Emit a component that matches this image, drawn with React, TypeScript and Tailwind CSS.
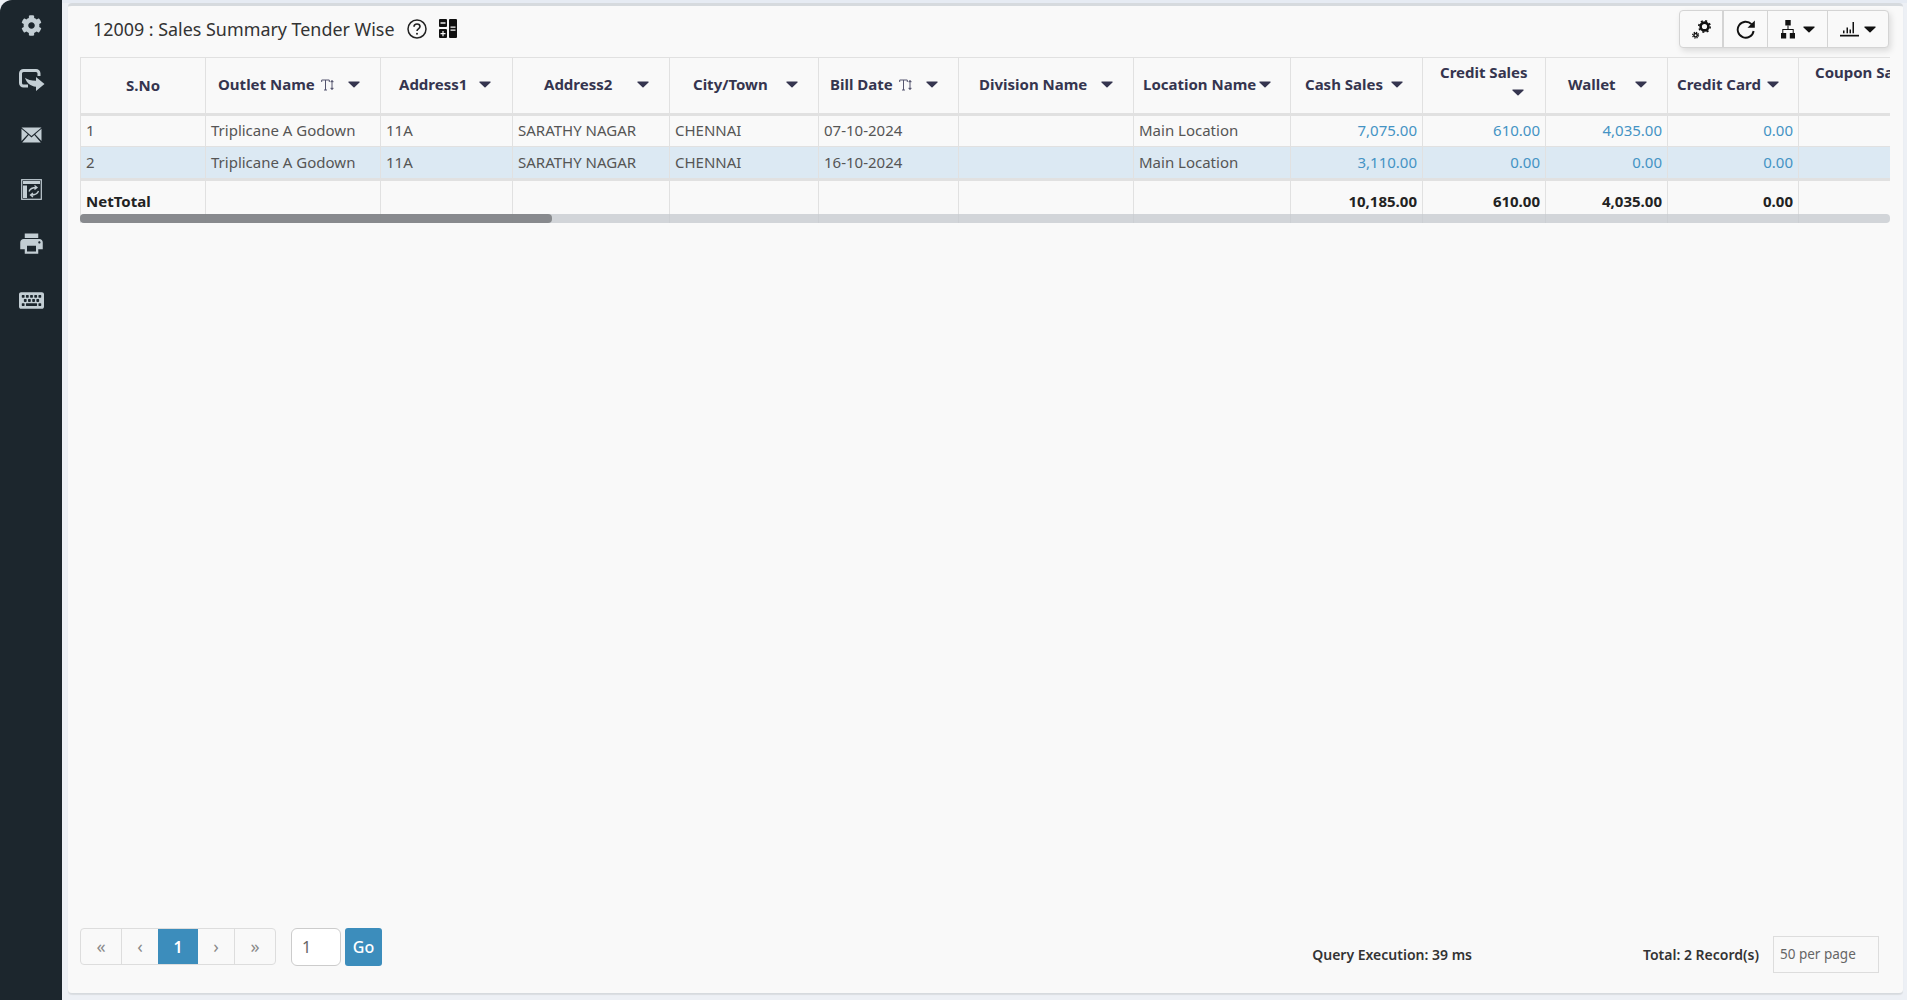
import { FaCog, FaKeyboard } from "react-icons/fa";
import { MdPrint } from "react-icons/md";

type Column = {
  label: string;
  width: string;
  head: string;
  sort?: boolean;
  stacked?: boolean;
  caretGap?: string;
};

const columns: Column[] = [
  { label: "S.No", width: "w-[125px]", head: "justify-center pt-[1px]" },
  { label: "Outlet Name", width: "w-[175px]", head: "pl-[12px]", sort: true, caretGap: "ml-[14px]" },
  { label: "Address1", width: "w-[132px]", head: "pl-[18px]", caretGap: "ml-[12px]" },
  { label: "Address2", width: "w-[157px]", head: "pl-[31px]", caretGap: "ml-[25px]" },
  { label: "City/Town", width: "w-[149px]", head: "pl-[23px]", caretGap: "ml-[18px]" },
  { label: "Bill Date", width: "w-[140px]", head: "pl-[11px]", sort: true, caretGap: "ml-[14px]" },
  { label: "Division Name", width: "w-[175px]", head: "pl-[20px]", caretGap: "ml-[14px]" },
  { label: "Location Name", width: "w-[157px]", head: "pl-[9px]", caretGap: "ml-[3px]" },
  { label: "Cash Sales", width: "w-[132px]", head: "pl-[14px]", caretGap: "ml-[8px]" },
  { label: "Credit Sales", width: "w-[123px]", head: "pl-[17px]", stacked: true, caretGap: "ml-[72px]" },
  { label: "Wallet", width: "w-[122px]", head: "pl-[22px]", caretGap: "ml-[19px]" },
  { label: "Credit Card", width: "w-[131px]", head: "pl-[9px]", caretGap: "ml-[6px]" },
  { label: "Coupon Sales", width: "w-[132px]", head: "pl-[16px]", stacked: true, caretGap: "ml-[80px]" },
];

const rows = [
  ["1", "Triplicane A Godown", "11A", "SARATHY NAGAR", "CHENNAI", "07-10-2024", "", "Main Location", "7,075.00", "610.00", "4,035.00", "0.00", ""],
  ["2", "Triplicane A Godown", "11A", "SARATHY NAGAR", "CHENNAI", "16-10-2024", "", "Main Location", "3,110.00", "0.00", "0.00", "0.00", ""],
];

const totals = ["NetTotal", "", "", "", "", "", "", "", "10,185.00", "610.00", "4,035.00", "0.00", ""];

function Caret({ className = "" }: { className?: string }) {
  return (
    <svg className={`shrink-0 ${className}`} width="12" height="7" viewBox="0 0 12 7">
      <path d="M1 0.5h10c.6 0 .9.7.5 1.1l-5 4.7c-.3.3-.7.3-1 0l-5-4.7C.1 1.2.4.5 1 .5z" fill="currentColor" />
    </svg>
  );
}

function SortIcon() {
  return (
    <svg className="ml-[6px] shrink-0 text-[#55556e]" width="13" height="12" viewBox="0 0 13 12" fill="none" stroke="currentColor">
      <path d="M0.7 3V1h7.6v2M4.5 1v10M3 11h3" strokeWidth="1" />
      <path d="M11 2.500v7" strokeWidth="1" />
      <path d="M9.500 3L11 1l1.500 2zM9.500 9L11 11l1.500-2z" fill="currentColor" strokeWidth="0.4" />
    </svg>
  );
}

function ShareIcon() {
  return (
    <svg width="26" height="24" viewBox="0 0 26 24" fill="none">
      <path d="M20 7V4.500A3 3 0 0 0 17 1.500H4.500a3 3 0 0 0-3 3V14a3 3 0 0 0 3 3H9" stroke="#c3ced4" strokeWidth="3" />
      <path d="M25.500 15L17 8v3.800c-5 0-8.500-1-11-3 1.500 5 5.500 8.500 11 9V22z" fill="#c3ced4" />
    </svg>
  );
}

function MailIcon() {
  return (
    <svg width="21" height="16" viewBox="0 0 21 16">
      <path d="M0.500 0.500h20L10.500 9z" fill="#c3ced4" />
      <path d="M0.500 1.800l6.300 5.400-6.300 6.800zM20.500 1.800l-6.300 5.400 6.300 6.800zM7.700 8l2.800 2.400L13.300 8l6.500 7.500H1.200z" fill="#c3ced4" />
    </svg>
  );
}

function TableSwapIcon() {
  return (
    <svg width="21" height="21" viewBox="0 0 21 21" fill="none">
      <rect x="0.700" y="0.700" width="19.600" height="19.600" stroke="#c3ced4" strokeWidth="1.200" />
      <rect x="2" y="2" width="17" height="3" fill="#c3ced4" />
      <rect x="2" y="6.500" width="4" height="12.500" fill="#c3ced4" />
      <path d="M8 12.500c1-3 4-4 7.500-4M13.500 6.500l2.500 2-2.500 2M17.500 12c-1 3-4 4-7.500 4M12 14l-2.500 2 2.500 2" stroke="#c3ced4" strokeWidth="1.300" />
    </svg>
  );
}

function CalcIcon() {
  return (
    <svg width="18" height="19" viewBox="0 0 18 19">
      <rect x="0" y="0" width="8" height="8" rx="1" fill="#111" />
      <rect x="1.500" y="3.300" width="5" height="1.400" fill="#fafafa" />
      <rect x="0" y="10" width="8" height="9" rx="1" fill="#111" />
      <path d="M1.500 14h5v1.200h-5zM3.400 12h1.200v5.200H3.400z" fill="#fafafa" />
      <rect x="10" y="0" width="8" height="19" rx="1" fill="#111" />
      <path d="M11.500 7.500h5v1.300h-5zM11.500 10.500h5v1.300h-5z" fill="#fafafa" />
    </svg>
  );
}

function GearsIcon() {
  return (
    <svg width="19" height="19" viewBox="0 0 19 19" fill="none" stroke="#111">
      <circle cx="12.500" cy="6.500" r="3.900" strokeWidth="2.600" />
      <circle cx="12.500" cy="6.500" r="5.700" strokeWidth="1.600" strokeDasharray="2 2.480" />
      <circle cx="3.600" cy="15.200" r="1.700" strokeWidth="1.500" />
      <circle cx="3.600" cy="15.200" r="3" strokeWidth="1.100" strokeDasharray="1.300 1.060" />
    </svg>
  );
}

function RefreshIcon() {
  return (
    <svg width="20" height="19" viewBox="0 0 20 19" fill="none">
      <path d="M15.500 4.200A8 8 0 1 0 17.600 11" stroke="#111" strokeWidth="1.900" />
      <path d="M18.800 0.500v7.300h-7.300z" fill="#111" />
    </svg>
  );
}

function TreeIcon() {
  return (
    <svg width="14" height="19" viewBox="0 0 14 19" fill="#111">
      <rect x="4.300" y="0" width="5.400" height="5.500" />
      <path d="M6.500 5.500h1v3.500h5.200v4h-1v-3H2.300v3h-1V9h5.200z" />
      <rect x="0" y="13" width="5.200" height="5.500" />
      <rect x="8.800" y="13" width="5.200" height="5.500" />
    </svg>
  );
}

function ChartIcon() {
  return (
    <svg width="19" height="16" viewBox="0 0 19 16" fill="#111">
      <rect x="0" y="13.800" width="19" height="1.700" />
      <rect x="3" y="9.500" width="1.500" height="2.800" />
      <rect x="6.500" y="6.500" width="1.500" height="5.800" />
      <rect x="9.500" y="8.500" width="1.500" height="3.800" />
      <rect x="12.500" y="1" width="1.500" height="11.300" />
    </svg>
  );
}

function HeaderCell({ column }: { column: Column }) {
  if (column.stacked) {
    return (
      <th className="border border-[#e1e1e1] border-b-[3px] align-top p-0 pt-[3px] text-left">
        <div className={`whitespace-nowrap ${column.head}`}>{column.label}</div>
        <div className={`mt-[5px] ${column.head}`}>
          <Caret className={column.caretGap} />
        </div>
      </th>
    );
  }
  return (
    <th className="border border-[#e1e1e1] border-b-[3px] p-0 pb-[2px]">
      <div className={`flex items-center whitespace-nowrap ${column.head}`}>
        {column.label}
        {column.sort && <SortIcon />}
        {column.caretGap && <Caret className={column.caretGap} />}
      </div>
    </th>
  );
}

const pageCell = "flex items-center justify-center h-full border-r border-[#dddddd] text-[#8a8a8a]";

export default function App() {
  return (
    <div className="flex h-screen w-full overflow-hidden bg-[#edf0f5] text-[15px] text-[#555555] [font-family:'Noto_Sans',sans-serif]">
      <aside className="flex w-[62px] shrink-0 flex-col items-center rounded-tl-[12px] bg-[#1c262d] pt-[15px]">
        <div className="flex h-[52px] items-start justify-center"><FaCog size={21} color="#c3ced4" /></div>
        <div className="flex h-[56px] items-start justify-center pl-[2px] pt-[2px]"><ShareIcon /></div>
        <div className="flex h-[53px] items-start justify-center pt-[4px]"><MailIcon /></div>
        <div className="flex h-[54px] items-start justify-center pt-[3px]"><TableSwapIcon /></div>
        <div className="flex h-[58px] items-start justify-center"><MdPrint size={27} color="#c3ced4" /></div>
        <div className="flex items-start justify-center pl-[1px]"><FaKeyboard size={25} color="#c3ced4" /></div>
      </aside>

      <div className="flex min-w-0 flex-1 flex-col border-t-[3px] border-[#e6ebf3] pl-[6px] pr-[4px] pb-[6px]">
        <main className="flex flex-1 flex-col rounded-[4px] border-t-[3px] border-b border-[#d6dade] bg-[#f9f9f9] px-[12px] pt-[4px] shadow-[0_1px_1px_rgba(0,0,0,0.08)]">
          <header className="flex h-[38px] items-center justify-between pr-[2px]">
            <div className="flex items-center pl-[13px]">
              <h1 className="text-[17.900px] font-normal text-[#333333]">12009 : Sales Summary Tender Wise</h1>
              <svg className="ml-[13px]" width="20" height="20" viewBox="0 0 20 20" fill="none" stroke="#222">
                <circle cx="10" cy="10" r="9" strokeWidth="1.500" />
                <path d="M7 7.800c0-1.800 1.400-2.800 3-2.800s3 1 3 2.600c0 2.400-3 2.200-3 4.400" strokeWidth="1.600" />
                <circle cx="10" cy="14.700" r="1" fill="#222" stroke="none" />
              </svg>
              <span className="ml-[12px]"><CalcIcon /></span>
            </div>
            <div className="flex h-[38px] items-stretch rounded-[4px] border border-[#d4d4d4] bg-[#f9f9f9] shadow-[2px_3px_6px_rgba(0,0,0,0.12)]">
              <div className="flex w-[44px] items-center justify-center border-r-2 border-[#d4d4d4]"><GearsIcon /></div>
              <div className="flex w-[44px] items-center justify-center border-r border-[#d4d4d4]"><RefreshIcon /></div>
              <div className="flex w-[60px] items-center justify-center gap-[8px] border-r border-[#d4d4d4]">
                <TreeIcon />
                <Caret className="text-[#111]" />
              </div>
              <div className="flex w-[60px] items-center justify-center gap-[5px]">
                <ChartIcon />
                <Caret className="text-[#111]" />
              </div>
            </div>
          </header>

          <div className="relative mt-[9px] w-[1810px] overflow-hidden">
            <table className="w-[1850px] table-fixed border-collapse">
              <colgroup>
                {columns.map((column) => (
                  <col className={column.width} key={column.label} />
                ))}
              </colgroup>
              <thead>
                <tr className="h-[57px] text-[15px] font-bold text-[#35354f]">
                  {columns.map((column) => (
                    <HeaderCell column={column} key={column.label} />
                  ))}
                </tr>
              </thead>
              <tbody>
                {rows.map((row, rowIndex) => (
                  <tr className={rowIndex === 1 ? "h-[33px] bg-[#dce9f3]" : "h-[32px]"} key={row[0]}>
                    {row.map((value, cellIndex) => (
                      <td
                        className={`overflow-hidden whitespace-nowrap border border-[#e1e1e1] px-[5px] py-0 ${rowIndex === 1 ? "border-b-[3px]" : "pb-[2px]"} ${cellIndex >= 8 ? "text-right text-[#4493c4]" : ""}`}
                        key={cellIndex}
                      >
                        {value}
                      </td>
                    ))}
                  </tr>
                ))}
                <tr className="h-[43px] font-bold text-[#222222]">
                  {totals.map((value, cellIndex) => (
                    <td
                      className={`whitespace-nowrap border-x border-[#e1e1e1] px-[5px] pb-[2px] pt-0 ${cellIndex >= 8 ? "text-right" : ""}`}
                      key={cellIndex}
                    >
                      {value}
                    </td>
                  ))}
                </tr>
              </tbody>
            </table>
            {/* scrollbar overlay, the cell lines show through it */}
            <div className="absolute bottom-0 left-0 h-[9px] w-full rounded-[4px] bg-[#c4c8cd]/75">
              <div className="h-full w-[472px] rounded-[4px] bg-[#7f8285]/90" />
            </div>
          </div>

          <div className="flex-1" />

          <footer className="flex items-start pb-[20px]">
            <nav className="flex h-[37px] w-[196px] items-stretch rounded-[4px] border border-[#dddddd] text-[18px]">
              <span className={`${pageCell} w-[41px]`}>«</span>
              <span className={`${pageCell} w-[36px] border-r-0`}>‹</span>
              <span className="flex w-[40px] items-center justify-center bg-[#3c8dbc] text-[16px] font-semibold text-white">1</span>
              <span className={`${pageCell} w-[37px]`}>›</span>
              <span className="flex flex-1 items-center justify-center text-[#8a8a8a]">»</span>
            </nav>
            <div className="ml-[15px] flex h-[38px] w-[50px] items-center rounded-[6px] border border-[#cccccc] bg-white pl-[10px] text-[16px] text-[#666666]">1</div>
            <button className="ml-[4px] flex h-[38px] w-[37px] items-center justify-center rounded-[3px] bg-[#3c8dbc] text-[16px] font-medium text-white">Go</button>

            <div className="ml-auto mt-[8px] flex items-center pr-[12px] text-[14px] font-semibold text-[#333333]">
              <span>Query Execution: 39 ms</span>
              <span className="ml-[171px]">Total: 2 Record(s)</span>
              <span className="ml-[14px] flex h-[37px] w-[106px] items-center border border-[#dddddd] pl-[6px] text-[13.500px] font-normal text-[#666666]">50 per page</span>
            </div>
          </footer>
        </main>
      </div>
    </div>
  );
}
